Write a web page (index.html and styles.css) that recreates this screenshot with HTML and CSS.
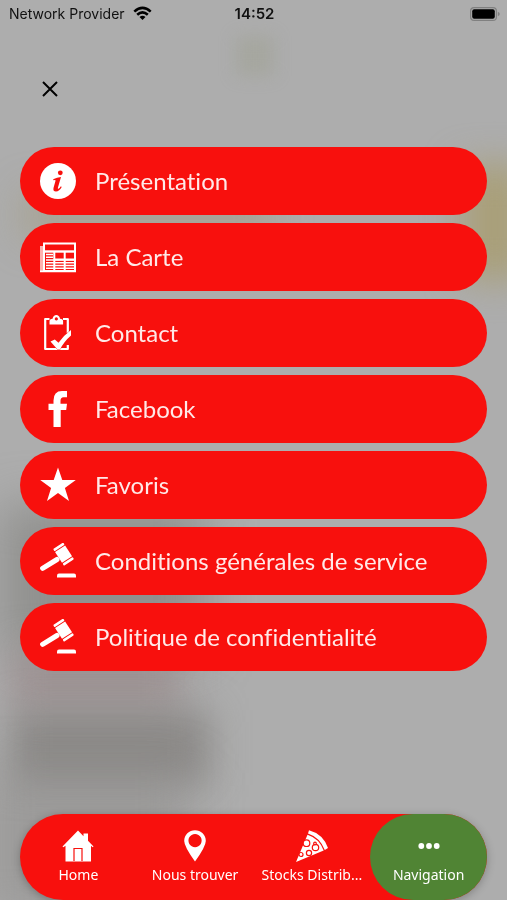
FILE: index.html
```
<!DOCTYPE html>
<html lang="fr">
<head>
<meta charset="UTF-8">
<meta name="viewport" content="width=device-width, initial-scale=1.0">
<title>Navigation</title>
<link rel="stylesheet" href="styles.css">
</head>
<body>
<!-- dimmed, blurred page behind the menu -->
<div class="backdrop">
    <div class="blob logo"></div>
    <div class="blob banner"></div>
    <div class="blob yellow"></div>
    <div class="blob photo"></div>
    <div class="blob pink"></div>
    <div class="blob shade"></div>
    <div class="blob footer"></div>
</div>

<!-- gavel is used by both legal entries -->
<svg class="defs" aria-hidden="true">
    <symbol id="gavel" viewBox="0 0 36 36">
        <path d="M2.600 25.300 17 16.500" stroke="#fff" stroke-width="5" stroke-linecap="round"/>
        <g transform="translate(23.500 11) rotate(-33)" fill="#fff">
            <rect x="-6" y="-9.800" width="12" height="2.600" rx="1"/>
            <rect x="-6" y="-6.300" width="12" height="12.800"/>
            <rect x="-6" y="7.500" width="12" height="2.600" rx="1"/>
        </g>
        <path d="M17 34.500v-2q0-2 2-2h15q2 0 2 2v2z" fill="#fff"/>
    </symbol>
</svg>

<header class="status">
    <div class="network">
        <span>Network Provider</span>
        <svg width="19" height="15" viewBox="0 0 19 15" fill="none" stroke="#000" stroke-width="2.600">
            <path d="M1.300 5.600Q9.500-1.800 17.700 5.600"/>
            <path d="M4.200 8.800Q9.500 4 14.800 8.800"/>
            <path d="M9.500 14 6.500 11Q9.500 8.400 12.500 11z" fill="#000" stroke="none"/>
        </svg>
    </div>
    <time class="time">14:52</time>
    <svg class="battery" width="30" height="14" viewBox="0 0 30 14">
        <rect x=".6" y=".6" width="25.800" height="12.800" rx="3.500" fill="none" stroke="#808080" stroke-width="1.200"/>
        <rect x="2.200" y="2.200" width="22.600" height="9.600" rx="2" fill="#000"/>
        <path d="M27.800 4.800q2 1 2 2.200t-2 2.200z" fill="#808080"/>
    </svg>
</header>

<button class="close" type="button" aria-label="Fermer">
    <svg width="16" height="16" viewBox="0 0 16 16" fill="none" stroke="#000" stroke-width="2">
        <path d="M1 1l14 14M15 1L1 15"/>
    </svg>
</button>

<nav class="menu">
    <a class="item" href="#">
        <svg class="icon" viewBox="0 0 36 36">
            <circle cx="18" cy="18" r="18" fill="#fff"/>
            <circle cx="20.300" cy="9.800" r="2.400" fill="#f8100d"/>
            <path d="M13.200 16.300Q17 14.200 21 14L17.900 24.800Q17.600 26.300 18.600 25.700 19.800 25 20.900 23.300L21.700 23.900Q19.300 28.200 16 28.400 12.800 28.400 13.500 24.900L15.600 17.600Q15.400 16.600 13.400 17.300z" fill="#f8100d"/>
        </svg>
        <span class="label">Présentation</span>
    </a>
    <a class="item" href="#">
        <svg class="icon" viewBox="0 0 36 36" fill="none" stroke="#fff">
            <path d="M1.500 7v25" stroke-width="3" stroke="#ffb0ae"/>
            <path d="M0 32.300h36" stroke-width="1.800"/>
            <rect x="4" y="4.500" width="31" height="27.500" stroke-width="2"/>
            <path d="M4 12.500h31" stroke-width="2.400"/>
            <path d="M14.300 12v20M24.700 12v20" stroke-width="2"/>
            <path d="M6 15.500h7M6 18.300h7M6 21h28M6 23.800h28M6 26.500h28M6 29.200h28" stroke-width="1.400"/>
            <path d="M14 20.500h20" stroke-width="2"/>
        </svg>
        <span class="label">La Carte</span>
    </a>
    <a class="item" href="#">
        <svg class="icon" viewBox="0 0 36 36">
            <path d="M9.500 4H5.200v30h22.600V30M23 4h4.800V18" fill="none" stroke="#fff" stroke-width="2.200" stroke-linejoin="round"/>
            <path fill-rule="evenodd" d="M9.500 9.500V6q0-2 3-2.300Q13.500 0 16.300 0t3.800 3.700q3 .3 3 2.300v3.500zM16.300 2.300a1.600 1.600 0 1 0 .1 0z" fill="#fff"/>
            <path d="M10.500 26.500l4.300-2 3.700 3.300Q23.500 20.500 31 15V20.500Q24 26.500 20 34.500h-2.500z" fill="#fff" stroke="#f8100d" stroke-width=".8" paint-order="stroke"/>
        </svg>
        <span class="label">Contact</span>
    </a>
    <a class="item" href="#">
        <svg class="icon" viewBox="0 0 36 36">
            <path d="M13.500 36V19H8.500v-6.300h5V9.500Q13.500 0 22 0h5v6.300h-3.500q-3 0-3 3.500V12.700h6.500l-.8 6.300h-5.500v17z" fill="#fff"/>
        </svg>
        <span class="label">Facebook</span>
    </a>
    <a class="item" href="#">
        <svg class="icon" viewBox="0 0 36 36">
            <path d="M18 .5l4.300 12.500H35.800L24.900 20.900 29 34 18 26 7 34 11.100 20.900.2 13H13.700z" fill="#fff"/>
        </svg>
        <span class="label">Favoris</span>
    </a>
    <a class="item" href="#">
        <svg class="icon"><use href="#gavel"/></svg>
        <span class="label">Conditions générales de service</span>
    </a>
    <a class="item" href="#">
        <svg class="icon"><use href="#gavel"/></svg>
        <span class="label">Politique de confidentialité</span>
    </a>
</nav>

<nav class="tabs">
    <a class="tab" href="#">
        <svg class="tab-icon" viewBox="0 0 32 32">
            <path d="M.5 16.500 16 .5l5.500 5.700V3.500H26v7.300l5.500 5.700-.8.700L29 15.800V31.500H3.500V15.800L1.300 17.200z" fill="#fff"/>
            <path d="M12 31V18.500h8V31" fill="none" stroke="#f8100d" stroke-width="1.200"/>
        </svg>
        <span class="tab-label">Home</span>
    </a>
    <a class="tab" href="#">
        <svg class="tab-icon" viewBox="0 0 32 32">
            <path fill-rule="evenodd" d="M16 31.500Q5.200 16.500 5.200 11a10.800 10.800 0 0 1 21.600 0Q26.800 16.500 16 31.500zM16 4a6.600 6.600 0 1 0 .1 0z" fill="#fff"/>
        </svg>
        <span class="tab-label">Nous trouver</span>
    </a>
    <a class="tab" href="#">
        <svg class="tab-icon" viewBox="0 0 32 32">
            <path d="M13 .3Q27 4 32 18L28.800 20Q24 7.500 12 3.500z" fill="#fff"/>
            <path d="M11.500 4.700Q23.300 8.500 27.700 20.500L0 32z" fill="#fff"/>
            <g fill="#fff" stroke="#f8100d" stroke-width="1.200">
                <circle cx="10.500" cy="13.200" r="3.300"/>
                <circle cx="19.500" cy="17.500" r="3.200"/>
                <circle cx="13" cy="23" r="2.600"/>
                <circle cx="5" cy="24.500" r="2"/>
                <circle cx="19" cy="13.500" r="1.300"/>
            </g>
        </svg>
        <span class="tab-label">Stocks Distrib...</span>
    </a>
    <a class="tab active" href="#">
        <svg class="tab-icon" viewBox="0 0 32 32" fill="#fff">
            <circle cx="8.300" cy="16" r="2.900"/>
            <circle cx="16" cy="16" r="2.900"/>
            <circle cx="23.700" cy="16" r="2.900"/>
        </svg>
        <span class="tab-label">Navigation</span>
    </a>
</nav>
</body>
</html>
```
FILE: styles.css
```
* {
    box-sizing: border-box;
}

body {
    margin: 0;
    min-height: 100vh;
    display: flex;
    flex-direction: column;
    font-family: Lato, sans-serif;
    color: #fff;
    background: #adadad;
}

a {
    color: inherit;
    text-decoration: none;
}

.backdrop {
    position: fixed;
    inset: 0;
    z-index: -1;
    overflow: hidden;
}

.blob {
    position: absolute;
    filter: blur(18px);
}

.logo {
    top: 36px;
    left: 236px;
    width: 38px;
    height: 40px;
    background: rgba(155, 158, 140, 0.4);
    filter: blur(8px);
}

.banner {
    top: 190px;
    left: 20px;
    width: 50%;
    height: 50px;
    background: rgba(160, 150, 115, 0.4);
}

.yellow {
    top: 165px;
    right: -20px;
    width: 65px;
    height: 115px;
    background: #a99f78;
}

.photo {
    top: 505px;
    left: 0;
    width: 205px;
    height: 150px;
    background: rgba(125, 125, 122, 0.6);
    filter: blur(24px);
}

.pink {
    top: 650px;
    left: 10px;
    width: 170px;
    height: 60px;
    background: rgba(150, 132, 134, 0.6);
}

.shade {
    top: 710px;
    left: 10px;
    width: 200px;
    height: 75px;
    background: rgba(125, 122, 120, 0.7);
}

.footer {
    top: 770px;
    left: -20px;
    width: 210px;
    height: 150px;
    background: rgba(140, 138, 135, 0.5);
    filter: blur(24px);
}

.defs {
    position: absolute;
    width: 0;
    height: 0;
}

.status {
    display: grid;
    grid-template-columns: 1fr auto 1fr;
    align-items: center;
    height: 27px;
    padding: 0 7px 0 9px;
    font-family: Inter, sans-serif;
    font-size: 14px;
    color: #111;
}

.network {
    display: flex;
    align-items: center;
    gap: 8px;
}

.time {
    font-size: 15px;
    font-weight: 600;
}

.battery {
    justify-self: end;
}

.close {
    display: flex;
    align-items: center;
    justify-content: center;
    width: 36px;
    height: 36px;
    margin: 44px 0 40px 32px;
    padding: 0;
    border: none;
    background: none;
    cursor: pointer;
}

.menu {
    display: flex;
    flex-direction: column;
    gap: 8px;
    padding: 0 20px;
}

.item {
    display: flex;
    align-items: center;
    gap: 19px;
    height: 68px;
    padding: 0 20px;
    border-radius: 34px;
    background: #f8100d;
    color: #ffe9e8;
    font-size: 24px;
    font-variant-ligatures: none;
}

.label {
    padding-bottom: 2px;
}

.icon {
    flex: none;
    width: 36px;
    height: 36px;
}

.tabs {
    display: flex;
    height: 86px;
    margin: auto 20px 0;
    border-radius: 43px;
    background: #f8100d;
    box-shadow: 0 2px 8px rgba(0, 0, 0, 0.25);
}

.tab {
    flex: 1;
    min-width: 0;
    display: flex;
    flex-direction: column;
    align-items: center;
    gap: 3px;
    padding: 16px 6px 0;
    border-radius: 43px;
    font-family: "Noto Sans", sans-serif;
    font-size: 14px;
    line-height: 20px;
}

.active {
    background: #508434;
}

.tab-icon {
    flex: none;
    width: 32px;
    height: 32px;
}

.tab-label {
    white-space: nowrap;
}
```
